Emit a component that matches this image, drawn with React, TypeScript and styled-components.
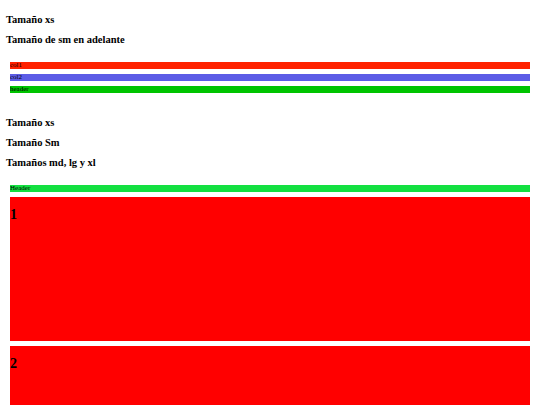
import * as React from 'react';
import styled, { createGlobalStyle } from 'styled-components';

const GlobalStyle = createGlobalStyle`
  html, body {
    margin: 0;
    padding: 0;
    background: #ffffff;
  }
  body {
    font-family: "Liberation Serif", "Times New Roman", serif;
    color: #000000;
  }
`;

export default function App() {
  const topBars = [
    { label: 'col1', color: '#ff2200' },
    { label: 'col2', color: '#5c5ce6' },
    { label: 'header', color: '#00c400' },
  ];
  const blocks = ['1', '2'];

  return (
    <Page>
      <GlobalStyle />
      <Section>
        <Title>Tamaño xs</Title>
        <Title>Tamaño de sm en adelante</Title>
      </Section>
      <BarList $top={15}>
        {topBars.map((bar) => (
          <Bar key={bar.label} color={bar.color}>
            {bar.label}
          </Bar>
        ))}
      </BarList>
      <Section $top={23}>
        <Title>Tamaño xs</Title>
        <Title>Tamaño Sm</Title>
        <Title>Tamaños md, lg y xl</Title>
      </Section>
      <BarList $top={15}>
        <Bar color="#13e040">Header</Bar>
        {blocks.map((num) => (
          <Block key={num}>
            <BlockNumber>{num}</BlockNumber>
          </Block>
        ))}
      </BarList>
    </Page>
  );
}

const Page = styled.div`
  padding: 13px 10px 0 6px;
  display: flex;
  flex-direction: column;
  height: 405px;
  overflow: hidden;
  box-sizing: border-box;
`;

const Section = styled.div<{ $top?: number }>`
  display: flex;
  flex-direction: column;
  gap: 6px;
  margin-top: ${(p) => p.$top ?? 0}px;
`;

const Title = styled.h3`
  margin: 0;
  font-size: 10.5px;
  line-height: 14px;
  font-weight: bold;
`;

const BarList = styled.div<{ $top?: number }>`
  display: flex;
  flex-direction: column;
  gap: 5px;
  margin-top: ${(p) => p.$top ?? 16}px;
  padding-left: 4px;
`;

const Bar = styled.div<{ color: string }>`
  background: ${(p) => p.color};
  height: 7px;
  font-size: 7px;
  line-height: 7px;
  color: #000000;
  overflow: hidden;
`;

const Block = styled.div`
  background: #ff0000;
  height: 144px;
  flex-shrink: 0;
  padding-top: 10px;
  box-sizing: border-box;
`;

const BlockNumber = styled.h2`
  margin: 0;
  font-size: 14px;
  line-height: 16px;
  font-weight: bold;
`;
